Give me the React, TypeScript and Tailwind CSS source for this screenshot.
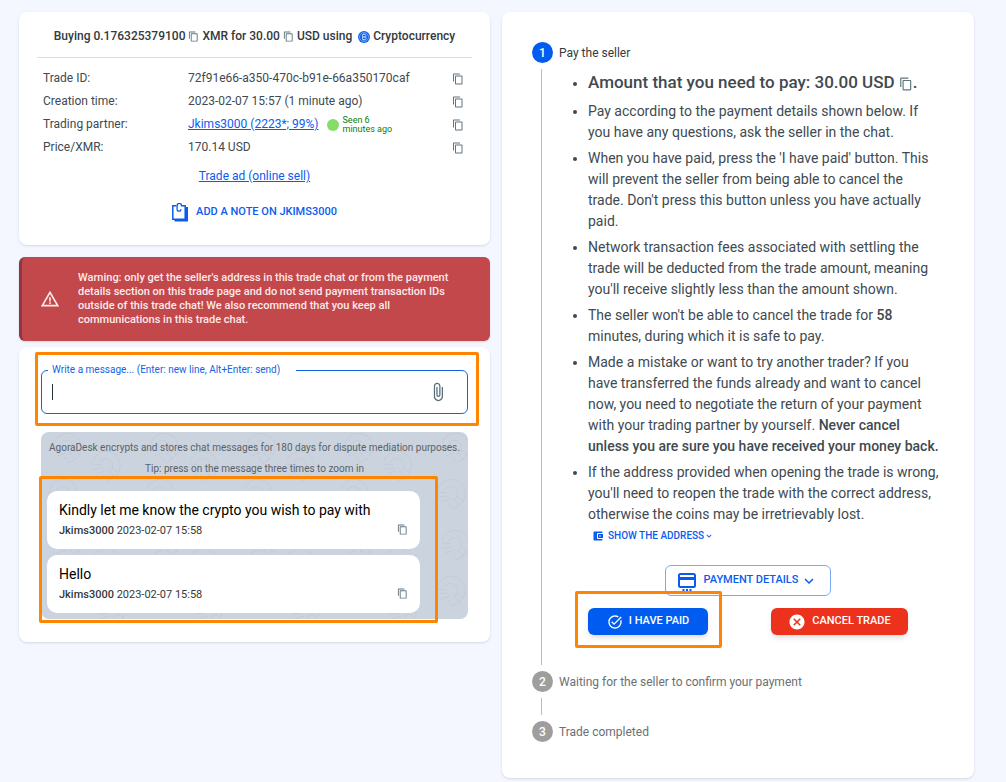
import React from "react";
import {
  MdAccountBalanceWallet,
  MdAttachFile,
  MdCancel,
  MdContentCopy,
  MdKeyboardArrowDown,
  MdTaskAlt,
  MdWarningAmber,
} from "react-icons/md";

interface CopyButtonProps {
  label: string;
  className?: string;
}

const CopyButton: React.FC<CopyButtonProps> = ({ label, className = "text-[11px]" }) => (
  <button
    type="button"
    aria-label={`Copy ${label}`}
    className={`inline-block align-middle text-[#607480] ${className}`}
  >
    <MdContentCopy />
  </button>
);

const CryptoIcon: React.FC = () => (
  <svg viewBox="0 0 24 24" className="inline-block h-3 w-3 align-middle" aria-hidden="true">
    <circle cx="12" cy="12" r="12" fill="#1463e6" />
    <circle cx="12" cy="12" r="9" fill="none" stroke="#9cc0fb" strokeWidth="1.2" />
    <path
      d="M9 7h4.5a2.5 2.5 0 0 1 0 5H9h5a2.5 2.5 0 0 1 0 5H9zM11 5v2M11 17v2M14 5v2M14 17v2"
      fill="none"
      stroke="#cfe0fd"
      strokeWidth="1.5"
    />
  </svg>
);

const NoteIcon: React.FC = () => (
  <svg viewBox="0 0 16 19" className="h-[19px] w-4" fill="none" aria-hidden="true">
    <path d="M13 4h3v14.500H2.500V16H13z" fill="#0b5cee" />
    <path d="M4.500 2.700H.8v13.600h12.400V2.700H10" stroke="#0b5cee" strokeWidth="1.500" />
    <path
      d="M9.500 3.500V2.600a2.200 2.200 0 0 0-4.400 0v3.600a1.900 1.900 0 0 0 3.800 0"
      stroke="#0b5cee"
      strokeWidth="1.300"
    />
  </svg>
);

const CardIcon: React.FC = () => (
  <svg viewBox="0 0 18 19" className="h-[19px] w-[18px]" fill="none" aria-hidden="true">
    <rect x="1" y="1" width="16" height="13" rx="1.500" stroke="#0b5cee" strokeWidth="2" />
    <path d="M1 4h16v3H1z" fill="#0b5cee" />
    <path d="M4.500 17h2M8 17h2M11.500 17h2" stroke="#0b5cee" strokeWidth="2" />
  </svg>
);

const ChatPattern: React.FC = () => (
  <svg className="absolute inset-0 h-full w-full" aria-hidden="true">
    <defs>
      <g id="mark" fill="none" stroke="#c2cbd8" strokeWidth="1">
        <path d="M-13 -5A14 14 0 1 1 8 11L2 15L-3 9" />
        <path d="M-7 -3A7 7 0 1 1 2 6" />
        <path d="M-14 -2L-4 -1M-13 3L-3 2M-10 8L-1 5M3 5l6 7M6 2l7 5" />
      </g>
      <pattern id="marks" width="97" height="97" patternUnits="userSpaceOnUse">
        <use href="#mark" x="26" y="16" />
        <use href="#mark" x="65" y="34" />
        <use href="#mark" x="22" y="62" />
        <use href="#mark" x="70" y="82" />
      </pattern>
    </defs>
    <rect width="100%" height="100%" fill="url(#marks)" />
  </svg>
);

// Orange frame laid over the part it points at
const Highlight: React.FC<{ className: string }> = ({ className }) => (
  <div className={`pointer-events-none absolute rounded-[2px] border-3 border-[#ff8400] ${className}`} />
);

const TradeSummary: React.FC = () => (
  <section className="rounded-lg bg-white px-[18px] pb-[23px] pt-3.5 shadow-sm">
    <h1 className="border-b border-[#dcdfe1] pb-2.5 text-center text-xs font-medium leading-[21px] text-[#33393d]">
      Buying 0.176325379100 <CopyButton label="XMR amount" /> XMR for 30.00{" "}
      <CopyButton label="USD amount" /> USD using&nbsp; <CryptoIcon /> Cryptocurrency
    </h1>
    <dl className="mt-[9px] px-1.5 text-xs leading-[23px]">
      <div className="flex items-center">
        <dt className="w-[145px]">Trade ID:</dt>
        <dd className="grow">72f91e66-a350-470c-b91e-66a350170caf</dd>
        <CopyButton label="trade ID" className="mr-0.5 text-xs" />
      </div>
      <div className="flex items-center">
        <dt className="w-[145px]">Creation time:</dt>
        <dd className="grow">2023-02-07 15:57 (1 minute ago)</dd>
        <CopyButton label="creation time" className="mr-0.5 text-xs" />
      </div>
      <div className="flex items-center">
        <dt className="w-[145px]">Trading partner:</dt>
        <dd className="flex grow items-center">
          <a href="#partner" className="text-[#0b5cee] underline">
            Jkims3000 (2223*; 99%)
          </a>
          <span className="ml-2 h-3 w-3 rounded-full bg-[#85dc67]" />
          <span className="ml-1 w-14 text-[9px] leading-[9px] text-[#0b800b]">
            Seen 6 minutes ago
          </span>
        </dd>
        <CopyButton label="trading partner" className="mr-0.5 text-xs" />
      </div>
      <div className="flex items-center">
        <dt className="w-[145px]">Price/XMR:</dt>
        <dd className="grow">170.14 USD</dd>
        <CopyButton label="price" className="mr-0.5 text-xs" />
      </div>
    </dl>
    <div className="mt-1.5 text-center text-xs leading-[23px]">
      <a href="#ad" className="text-[#0b5cee] underline">
        Trade ad (online sell)
      </a>
    </div>
    <button
      type="button"
      className="mx-auto mt-3.5 flex items-center gap-2 text-[11px] font-medium leading-5 text-[#0b5cee]"
    >
      <NoteIcon />
      ADD A NOTE ON JKIMS3000
    </button>
  </section>
);

const WarningBanner: React.FC = () => (
  <div
    role="alert"
    className="mt-3 flex items-center rounded-md border-l-3 border-[#8f3544] bg-[#c2484b] py-[14px] pl-[18px] pr-8 text-[#fdeaea] shadow-sm"
  >
    <MdWarningAmber className="mr-[18px] shrink-0 text-xl" />
    <p className="text-[11px] font-medium leading-[14px]">
      Warning: only get the seller's address in this trade chat or from the payment details section
      on this trade page and do not send payment transaction IDs outside of this trade chat! We also
      recommend that you keep all communications in this trade chat.
    </p>
  </div>
);

const MessageField: React.FC = () => (
  <div className="relative">
    <fieldset className="h-[50px] rounded-md border border-[#1463e6] pl-1.5 pr-[19px]">
      <legend className="pl-1 pr-4 text-[10px] leading-3 text-[#1463e6]">
        <label htmlFor="message">Write a message... (Enter: new line, Alt+Enter: send)</label>
      </legend>
      <div className="flex h-8 items-center pl-1">
        <span className="h-4 w-px bg-[#263238]" />
        <textarea
          id="message"
          rows={1}
          className="h-5 grow resize-none bg-transparent text-sm outline-none"
        />
        <button type="button" aria-label="Attach file" className="text-xl text-[#546e7a]">
          <MdAttachFile />
        </button>
      </div>
    </fieldset>
    <Highlight className="-bottom-3 -left-1.5 -right-[11px] -top-3" />
  </div>
);

const ChatMessage: React.FC<{ text: string }> = ({ text }) => (
  <li className="rounded-[10px] bg-white px-3 py-2 text-black">
    <p className="text-sm leading-[22px]">{text}</p>
    <div className="flex items-center justify-between text-[11px] leading-5 text-[#33393d]">
      <p>
        <span className="font-medium">Jkims3000</span> 2023-02-07 15:58
      </p>
      <CopyButton label="message" className="pb-1 text-[11px]" />
    </div>
  </li>
);

const Chat: React.FC = () => (
  <section className="mt-1.5 rounded-lg bg-white px-[22px] pb-[23px] pt-[17px] shadow-sm">
    <MessageField />
    <div className="relative mt-[18px] rounded-lg bg-[#cbd3df] px-1.5 pb-1.5 pt-[5px]">
      <ChatPattern />
      <div className="relative -mx-1.5 text-center text-[10px] leading-[21px] text-[#5a6268]">
        <p>AgoraDesk encrypts and stores chat messages for 180 days for dispute mediation purposes.</p>
        <p>Tip: press on the message three times to zoom in</p>
      </div>
      <div className="relative mr-[42px] mt-3">
        <ul className="flex flex-col gap-1.5">
          <ChatMessage text="Kindly let me know the crypto you wish to pay with" />
          <ChatMessage text="Hello" />
        </ul>
        <Highlight className="-bottom-2.5 -left-2 -right-[18px] -top-[15px]" />
      </div>
    </div>
  </section>
);

interface StepProps {
  number: number;
  title: string;
  active?: boolean;
  last?: boolean;
  children?: React.ReactNode;
}

const Step: React.FC<StepProps> = ({ number, title, active, last, children }) => (
  <li>
    <div className="flex items-center gap-1.5">
      <span
        className={`flex h-[21px] w-[21px] items-center justify-center rounded-full text-xs font-medium text-white ${
          active ? "bg-[#005cf0]" : "bg-[#9e9e9e]"
        }`}
      >
        {number}
      </span>
      <h2 className={`text-xs ${active ? "text-[#33393d]" : "text-[#6b7073]"}`}>{title}</h2>
    </div>
    {!last && (
      <div className="my-1.5 ml-[9px] min-h-[17px] border-l border-[#bdbdbd] pl-2.5">{children}</div>
    )}
  </li>
);

const PaySteps: React.FC = () => (
  <>
    <ul className="ml-9 flex list-disc flex-col gap-[5px] pr-1 text-sm leading-[21px]">
      <li className="pb-0.5 pt-px">
        <span className="text-[17px] font-medium leading-6">
          Amount that you need to pay: 30.00 USD{" "}
          <CopyButton label="amount to pay" className="text-[14px]" />.
        </span>
      </li>
      <li>
        Pay according to the payment details shown below. If you have any questions, ask the seller
        in the chat.
      </li>
      <li>
        When you have paid, press the 'I have paid' button. This will prevent the seller from being
        able to cancel the trade. Don't press this button unless you have actually paid.
      </li>
      <li>
        Network transaction fees associated with settling the trade will be deducted from the trade
        amount, meaning you'll receive slightly less than the amount shown.
      </li>
      <li>
        The seller won't be able to cancel the trade for <b className="font-medium">58</b> minutes,
        during which it is safe to pay.
      </li>
      <li>
        Made a mistake or want to try another trader? If you have transferred the funds already and
        want to cancel now, you need to negotiate the return of your payment with your trading
        partner by yourself.{" "}
        <b className="font-medium">
          Never cancel unless you are sure you have received your money back.
        </b>
      </li>
      <li>
        If the address provided when opening the trade is wrong, you'll need to reopen the trade
        with the correct address, otherwise the coins may be irretrievably lost.
        <button
          type="button"
          className="ml-1 flex items-center text-[10px] font-medium text-[#0b5cee]"
        >
          <MdAccountBalanceWallet className="mr-1 text-xs" />
          SHOW THE ADDRESS
          <MdKeyboardArrowDown className="text-[10px]" />
        </button>
      </li>
    </ul>
    <div className="mt-[19px] flex justify-center">
      <button
        type="button"
        className="flex h-[31px] items-center rounded-md border border-[#7aaaf7] px-3 text-[11px] font-medium text-[#0b5cee]"
      >
        <span className="mr-2 mt-1">
          <CardIcon />
        </span>
        PAYMENT DETAILS
        <MdKeyboardArrowDown className="ml-0.5 text-lg" />
      </button>
    </div>
    <div className="mt-3 flex justify-center gap-[63px] pb-[30px]">
      <div className="relative">
        <button
          type="button"
          className="flex h-[27px] w-[120px] items-center justify-center gap-1.5 rounded-md bg-[#005cf0] text-[11px] font-medium text-white shadow-md"
        >
          <MdTaskAlt className="text-base" />
          I HAVE PAID
        </button>
        <Highlight className="-bottom-[13px] -left-[13px] -right-[14px] -top-[17px]" />
      </div>
      <button
        type="button"
        className="flex h-[27px] w-[137px] items-center justify-center gap-1.5 rounded-md bg-[#ec321c] text-[11px] font-medium text-white shadow-md"
      >
        <MdCancel className="text-lg" />
        CANCEL TRADE
      </button>
    </div>
  </>
);

export default function App() {
  return (
    <main className="grid min-h-screen grid-cols-[471fr_472fr] items-start gap-3 bg-[#f4f7ff] pb-1 pl-[19px] pr-8 pt-3 font-[Roboto,sans-serif] text-[#404a50]">
      <div>
        <TradeSummary />
        <WarningBanner />
        <Chat />
      </div>
      <section className="rounded-lg bg-white px-[30px] pb-9 pt-[30px] shadow-sm">
        <ol>
          <Step number={1} title="Pay the seller" active>
            <PaySteps />
          </Step>
          <Step number={2} title="Waiting for the seller to confirm your payment" />
          <Step number={3} title="Trade completed" last />
        </ol>
      </section>
    </main>
  );
}
